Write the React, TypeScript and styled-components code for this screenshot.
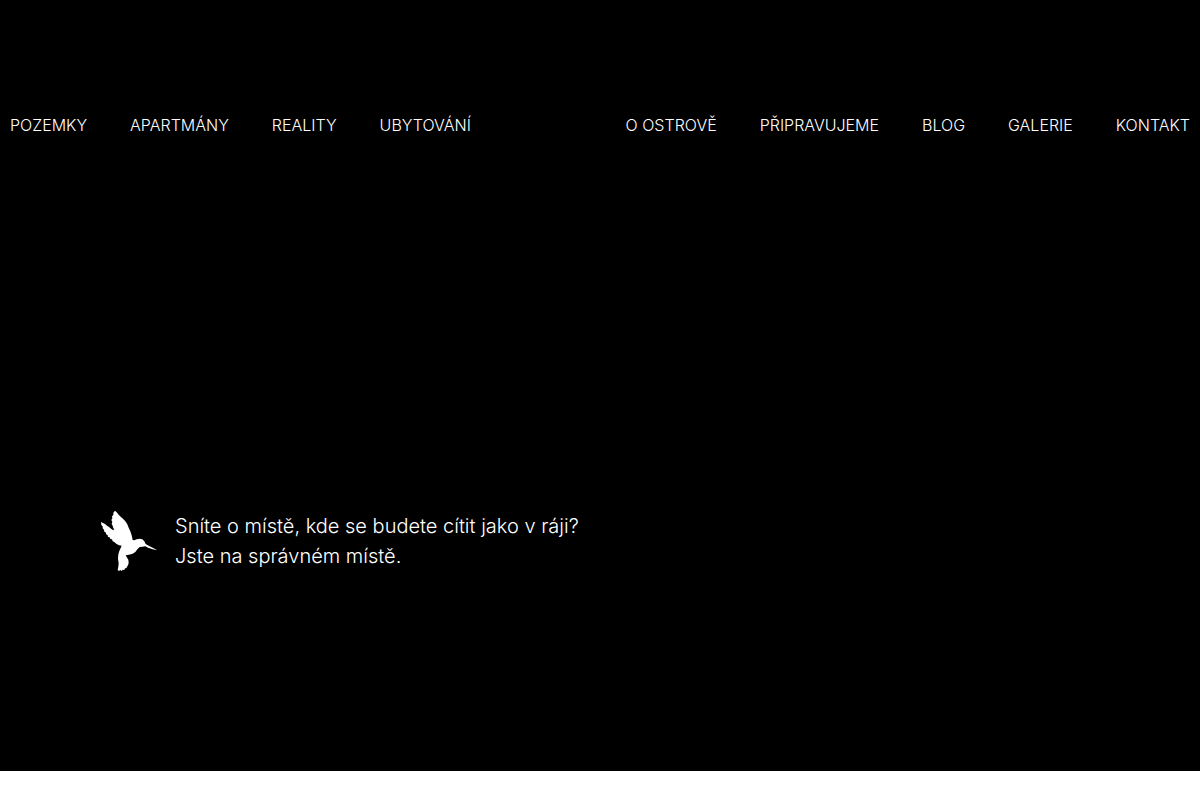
import React from "react";
import styled, { createGlobalStyle } from "styled-components";

const GlobalStyle = createGlobalStyle`
  *, *::before, *::after { box-sizing: border-box; }
  body {
    margin: 0;
    background: #fff;
    font-family: Inter, "Liberation Sans", sans-serif;
    font-weight: 300;
  }
`;

const Hero = styled.div`
  display: flex;
  flex-direction: column;
  padding: 110px 0 199px;
  background: #000;
  color: #fff;
`;

const Header = styled.header`
  display: flex;
  justify-content: space-between;
  padding: 0 10px;
`;

const Nav = styled.nav`
  display: flex;
  gap: 43px;
`;

const NavLink = styled.a`
  color: inherit;
  font-size: 16px;
  line-height: 30px;
  text-decoration: none;
  text-transform: uppercase;
  white-space: nowrap;
`;

const Intro = styled.main`
  display: flex;
  align-items: center;
  gap: 17px;
  padding: 370px 100px 0;
`;

const Bird = styled.svg`
  flex: none;
  width: 58px;
  height: 62px;
`;

const Slogan = styled.h1`
  margin: 0;
  font-size: 20px;
  font-weight: 300;
  line-height: 30px;
`;

const leftLinks = ["Pozemky", "Apartmány", "Reality", "Ubytování"];
const rightLinks = ["O ostrově", "Připravujeme", "Blog", "Galerie", "Kontakt"];

const Links = ({ label, items }: { label: string; items: string[] }) => (
  <Nav aria-label={label}>
    {items.map((item) => (
      <NavLink key={item} href="#">
        {item}
      </NavLink>
    ))}
  </Nav>
);

const Hummingbird = () => (
  <Bird viewBox="30 30 174 186" fill="currentColor" aria-hidden="true">
    <path d="M75 32 L80 37 L86 44 L92 50 L99 56 L106 64 L112 73 L116 83 L121 94 L125 106 L128 120 L133 121 L140 118 L149 116 L157 118 L163 124 L167 132 L176 137 L188 143 L202 151 L188 148 L174 143 L166 139 L157 140 L149 141 L142 148 L136 156 L128 161 L117 164 L107 166 L110 171 L115 179 L116 189 L114 196 L111 200 L109 205 L105 205 L103 210 L98 209 L95 213 L91 210 L87 213 L83 210 L85 200 L86 190 L84 176 L85 163 L88 153 L92 144 L95 137 L87 136 L80 132 L76 129 L73 126 L68 124 L66 118 L61 117 L59 112 L54 111 L53 105 L48 103 L48 98 L43 95 L42 89 L38 85 L38 79 L34 75 L33 66 L39 69 L45 72 L51 77 L57 81 L63 86 L70 91 L72 88 L69 82 L68 77 L65 72 L67 66 L64 60 L67 55 L66 49 L70 45 L70 38 Z" />
  </Bird>
);

export default function App() {
  return (
    <>
      <GlobalStyle />
      <Hero>
        <Header>
          <Links label="Nabídka" items={leftLinks} />
          <Links label="Informace" items={rightLinks} />
        </Header>
        <Intro>
          <Hummingbird />
          <Slogan>
            Sníte o místě, kde se budete cítit jako v ráji?
            <br />
            Jste na správném místě.
          </Slogan>
        </Intro>
      </Hero>
    </>
  );
}
